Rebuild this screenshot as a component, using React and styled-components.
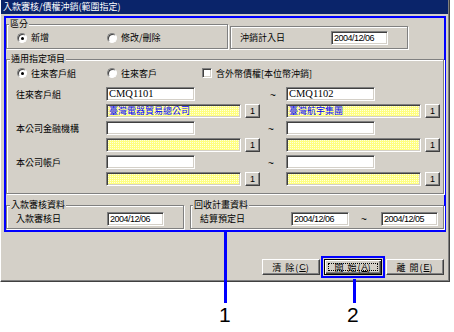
import React from 'react';
import styled, { createGlobalStyle } from 'styled-components';

const GlobalStyle = createGlobalStyle`
  body {
    margin: 0;
    background: #fff;
    font-family: 'Noto Sans CJK TC', 'Liberation Sans', sans-serif;
    font-size: 9px;
    line-height: 11px;
    color: #000;
  }
`;

const Page = styled.div`
  position: relative;
  width: 454px;
  height: 332px;
  overflow: hidden;
  background: #fff;
`;

const Window = styled.div`
  width: 450px;
  height: 282px;
  box-sizing: border-box;
  background: #d4d0c8;
  border-left: 1px solid #fff;
  border-right: 1px solid #404040;
  border-bottom: 1px solid #404040;
  box-shadow: inset -1px -1px 0 #808080;
  display: flex;
  flex-direction: column;
`;

const TitleBar = styled.div`
  height: 14px;
  margin-right: 1px;
  background: #0a246a;
  color: #fff;
  line-height: 14px;
  padding-left: 2px;
  white-space: nowrap;
`;

const Highlight = styled.div`
  margin: 2px 0 0 3px;
  width: 442px;
  height: 216px;
  box-sizing: border-box;
  border: 2px solid #0000ff;
  padding: 6px 0 0 0;
  display: flex;
  flex-direction: column;
`;

const Row = styled.div`
  display: flex;
  gap: ${p => p.gap || 0}px;
  margin-top: ${p => p.top || 0}px;
`;

const Group = styled.div`
  position: relative;
  box-sizing: border-box;
  width: ${p => p.w}px;
  height: ${p => p.h}px;
  margin-top: ${p => p.top || 0}px;
  border: 1px solid #808080;
  box-shadow: inset 1px 1px 0 #fff, 1px 1px 0 #fff;
  padding: ${p => p.pad || '0'};
  display: flex;
  flex-direction: column;
`;

const Legend = styled.span`
  position: absolute;
  top: -7px;
  left: ${p => p.left || 2}px;
  background: #d4d0c8;
  padding: 0 1px;
  line-height: 11px;
  white-space: nowrap;
`;

const Line = styled.div`
  display: flex;
  align-items: center;
  box-sizing: border-box;
  height: ${p => p.h || 14}px;
  padding-left: ${p => p.left || 0}px;
  padding-top: ${p => p.down || 0}px;
`;

const Option = styled.label`
  display: flex;
  align-items: center;
  gap: 4px;
  width: ${p => p.w}px;
  white-space: nowrap;
`;

const Radio = styled.span`
  position: relative;
  width: 10px;
  height: 10px;
  box-sizing: border-box;
  border-radius: 50%;
  background: #fff;
  border: 1px solid;
  border-color: #808080 #fff #fff #808080;
  box-shadow: inset 1px 1px 0 #404040;
  &::after {
    content: '';
    display: ${p => (p.checked ? 'block' : 'none')};
    position: absolute;
    left: 3px;
    top: 3px;
    width: 3px;
    height: 3px;
    border-radius: 50%;
    background: #000;
  }
`;

const Check = styled.span`
  width: 10px;
  height: 10px;
  box-sizing: border-box;
  background: #fff;
  border: 1px solid;
  border-color: #808080 #fff #fff #808080;
  box-shadow: inset 1px 1px 0 #404040, inset -1px -1px 0 #d4d0c8;
`;

const Label = styled.span`
  width: ${p => p.w}px;
  flex: none;
  white-space: nowrap;
`;

const Input = styled.div`
  width: ${p => p.w}px;
  height: 14px;
  box-sizing: border-box;
  flex: none;
  background: ${p => (p.yellow ? '#ffffe0' : '#fff')};
  background-image: ${p =>
    p.yellow
      ? 'linear-gradient(90deg, #ffff80 50%, transparent 50%), linear-gradient(#ffff80 50%, transparent 50%)'
      : 'none'};
  background-size: 2px 2px;
  border: 1px solid;
  border-color: #808080 #fff #fff #808080;
  box-shadow: inset 1px 1px 0 #404040, inset -1px -1px 0 #d4d0c8;
  padding-left: 2px;
  color: ${p => (p.yellow ? '#0000ff' : '#000')};
  font-family: ${p =>
    p.yellow
      ? "'Noto Sans CJK TC', sans-serif"
      : p.serif
        ? "'Liberation Serif', serif"
        : "'Liberation Sans', sans-serif"};
  font-size: ${p => (p.serif ? 10.5 : 9)}px;
  letter-spacing: ${p => (p.yellow || p.serif ? 0 : -0.5)}px;
  line-height: 12px;
  white-space: nowrap;
  overflow: hidden;
`;

const SmallButton = styled.div`
  width: 15px;
  height: 14px;
  box-sizing: border-box;
  flex: none;
  border: 1px solid;
  border-color: #fff #404040 #404040 #fff;
  box-shadow: inset -1px -1px 0 #808080;
  font-family: 'Liberation Sans', sans-serif;
  font-size: 9px;
  line-height: 12px;
  text-align: center;
`;

const Grid = styled.div`
  display: grid;
  grid-template-columns: 90px 154px 26px 154px;
  grid-auto-rows: 14px;
  row-gap: 3px;
  margin-top: 7px;
  align-items: center;
`;

const Field = styled.div`
  display: flex;
  align-items: center;
  gap: 4px;
`;

const Tilde = styled.span`
  box-sizing: border-box;
  padding-left: ${p => p.left || 0}px;
  padding-top: 2px;
  width: ${p => p.w || 'auto'};
  flex: none;
  font-family: 'Liberation Sans', sans-serif;
  font-size: 10px;
`;

const Buttons = styled.div`
  display: flex;
  justify-content: flex-end;
  gap: 4px;
  margin: 27px 5px 0 0;
`;

const Button = styled.div`
  width: 58px;
  height: 16px;
  box-sizing: border-box;
  border: 1px solid;
  border-color: ${p => (p.primary ? '#000' : '#fff #404040 #404040 #fff')};
  box-shadow: ${p =>
    p.primary
      ? 'inset 1px 1px 0 #fff, inset -1px -1px 0 #404040, inset -2px -2px 0 #808080, 0 0 0 1px #d4d0c8, 0 0 0 3px #0000ff'
      : 'inset -1px -1px 0 #808080'};
  display: flex;
  align-items: center;
  justify-content: center;
  position: relative;
  letter-spacing: 1px;
  &::after {
    content: '';
    display: ${p => (p.primary ? 'block' : 'none')};
    position: absolute;
    inset: 3px;
    border: 1px dotted #000;
  }
  u { font-family: 'Liberation Sans', sans-serif; font-size: 9px; letter-spacing: 0; }
`;

const Callout = styled.div`
  position: absolute;
  left: ${p => p.x}px;
  top: ${p => p.y}px;
  width: 3px;
  height: ${p => p.h}px;
  background: #0000ff;
`;

const Number = styled.span`
  position: absolute;
  left: ${p => p.x}px;
  top: 303px;
  font-family: 'Liberation Sans', sans-serif;
  font-size: 21px;
  line-height: 24px;
  color: #000;
`;

const rows = [
  { label: '往來客戶組', from: 'CMQ1101', to: 'CMQ1102', fromName: '臺灣電器貿易總公司', toName: '臺灣航宇集團' },
  { label: '本公司金融機構', from: '', to: '', fromName: '', toName: '' },
  { label: '本公司帳戶', from: '', to: '', fromName: '', toName: '' },
];

export default function App() {
  return (
    <Page>
      <GlobalStyle />
      <Window>
        <TitleBar>入款審核/債權沖銷(範圍指定)</TitleBar>
        <Highlight>
          <Row gap={2}>
            <Group w={222} h={25} pad="0 0 0 10px">
              <Legend>區分</Legend>
              <Line h={24} down={2}>
                <Option w={90}><Radio checked />新增</Option>
                <Option w={110}><Radio />修改/刪除</Option>
              </Line>
            </Group>
            <Group w={178} h={23} top={2} pad="0 0 0 9px">
              <Line h={21}>
                <Label w={91}>沖銷計入日</Label>
                <Input w={57}>2004/12/06</Input>
              </Line>
            </Group>
          </Row>
          <Group w={438} h={135} top={10} pad="6px 0 0 9px">
            <Legend left={3}>通用指定項目</Legend>
            <Line left={1}>
              <Option w={90}><Radio checked />往來客戶組</Option>
              <Option w={95}><Radio />往來客戶</Option>
              <Option w={160}><Check />含外幣債權[本位幣沖銷]</Option>
            </Line>
            <Grid>
              {rows.map(r => (
                <React.Fragment key={r.label}>
                  <Label>{r.label}</Label>
                  <Field><Input w={89} serif>{r.from}</Input></Field>
                  <Tilde left={r.from ? 10 : 8}>~</Tilde>
                  <Field><Input w={89} serif>{r.to}</Input></Field>
                  <span />
                  <Field><Input w={135} yellow>{r.fromName}</Input><SmallButton>1</SmallButton></Field>
                  <span />
                  <Field><Input w={135} yellow>{r.toName}</Input><SmallButton>1</SmallButton></Field>
                </React.Fragment>
              ))}
            </Grid>
          </Group>
          <Row gap={6} top={11}>
            <Group w={178} h={24} pad="0 0 0 9px">
              <Legend left={3}>入款審核資料</Legend>
              <Line h={22} down={3}>
                <Label w={91}>入款審核日</Label>
                <Input w={57}>2004/12/06</Input>
              </Line>
            </Group>
            <Group w={254} h={24} pad="0 0 0 9px">
              <Legend left={2}>回收計畫資料</Legend>
              <Line h={22} down={3}>
                <Label w={91}>結算預定日</Label>
                <Input w={58}>2004/12/06</Input>
                <Tilde w="32px" left={12}>~</Tilde>
                <Input w={57}>2004/12/05</Input>
              </Line>
            </Group>
          </Row>
        </Highlight>
        <Buttons>
          <Button>清 除(<u>C</u>)</Button>
          <Button primary>開 始(<u>A</u>)</Button>
          <Button>離 開(<u>E</u>)</Button>
        </Buttons>
      </Window>
      <Callout x={224} y={230} h={73} />
      <Number x={219}>1</Number>
      <Callout x={353} y={279} h={24} />
      <Number x={347}>2</Number>
    </Page>
  );
}
